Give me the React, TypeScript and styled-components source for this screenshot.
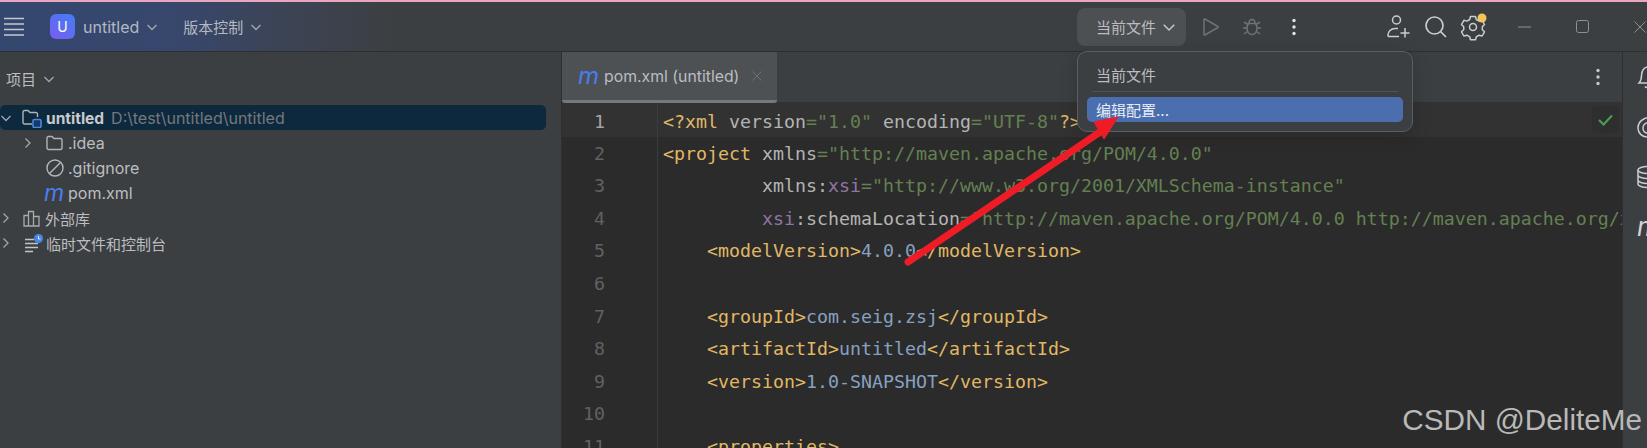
import React from "react";
import styled, { createGlobalStyle } from "styled-components";

const Global = createGlobalStyle`
  html, body { margin: 0; padding: 0; background: #3c3f41; }
  * { box-sizing: border-box; }
  svg { flex: none; }
`;

const UI = `Inter, "Noto Sans CJK SC", sans-serif`;
const MONO = `"DejaVu Sans Mono", "Liberation Mono", monospace`;

const Frame = styled.div`
  position: relative;
  width: 1647px;
  height: 448px;
  overflow: hidden;
  display: flex;
  flex-direction: column;
  background: #3c3f41;
  font-family: ${UI};
  color: #bbbdc0;
  font-size: 15px;
`;
const TopAccent = styled.div`
  height: 2px;
  flex: none;
  background: #e8a6bf;
`;
const TitleBar = styled.header`
  height: 50px;
  flex: none;
  display: flex;
  align-items: center;
  border-bottom: 1px solid #2d2f31;
  background: linear-gradient(90deg, #34476f 0, #37476d 170px, #3c4354 290px, #3c3f41 400px);
`;
const LeftGroup = styled.div`
  width: 1077px;
  flex: none;
  display: flex;
  align-items: center;
  padding-left: 4px;
`;
const ProjectLogo = styled.div`
  width: 25px;
  height: 25px;
  margin-left: 26px;
  border-radius: 6px;
  background: linear-gradient(35deg, #7a5cf0, #3f7ff2);
  color: #fff;
  font-size: 14px;
  display: flex;
  align-items: center;
  justify-content: center;
`;
const TitleMenu = styled.div<{ $ml: number }>`
  display: flex;
  align-items: center;
  gap: 7px;
  margin-left: ${(p) => p.$ml}px;
  white-space: nowrap;
  color: #b4b9c2;
`;
const LatinName = styled.span`
  font-size: 16px;
`;
const RunPill = styled.div`
  width: 109px;
  height: 38px;
  flex: none;
  border-radius: 8px;
  background: #4c5052;
  display: flex;
  align-items: center;
  gap: 6px;
  padding-left: 19px;
  margin-right: 4px;
  white-space: nowrap;
`;
const IconSlot = styled.div<{ $w: number; $ml?: number }>`
  width: ${(p) => p.$w}px;
  margin-left: ${(p) => p.$ml ?? 0}px;
  flex: none;
  display: flex;
  align-items: center;
  justify-content: center;
`;
const Body = styled.main`
  flex: 1;
  min-height: 0;
  display: flex;
`;
const Sidebar = styled.aside`
  width: 562px;
  flex: none;
  border-right: 1px solid #2d2f31;
  padding-right: 15px;
`;
const SidebarHeader = styled.div`
  height: 53px;
  padding: 0 0 0 6px;
  display: flex;
  align-items: center;
  gap: 7px;
`;
const TreeRow = styled.div<{ $selected?: boolean; $indent?: number }>`
  height: 25px;
  display: flex;
  align-items: center;
  padding-top: 1px;
  padding-left: ${(p) => p.$indent ?? 0}px;
  border-radius: 5px;
  background: ${(p) => (p.$selected ? "#0d293e" : "transparent")};
  white-space: nowrap;
`;
const ChevronSlot = styled.div<{ $w: number }>`
  width: ${(p) => p.$w}px;
  flex: none;
  display: flex;
  align-items: center;
`;
const NodeIcon = styled.div<{ $w: number }>`
  width: ${(p) => p.$w}px;
  flex: none;
  display: flex;
  align-items: center;
`;
const RootName = styled.span`
  font-weight: 700;
  font-size: 15.5px;
  color: #c9cacb;
  margin-right: 7px;
`;
const RootPath = styled.span`
  font-size: 16px;
  color: #75787b;
`;
const MavenGlyph = styled.span<{ $size: number; $color: string }>`
  font-family: Inter, sans-serif;
  font-style: italic;
  font-size: ${(p) => p.$size}px;
  line-height: 1;
  color: ${(p) => p.$color};
`;
const EditorPane = styled.section`
  position: relative;
  width: 1060px;
  flex: none;
  display: flex;
  flex-direction: column;
  overflow: hidden;
`;
const TabBar = styled.div`
  height: 50px;
  flex: none;
  display: flex;
  justify-content: space-between;
`;
const Tab = styled.div`
  width: 215px;
  height: 51px;
  position: relative;
  z-index: 1;
  display: flex;
  align-items: center;
  background: #4e5154;
  border-bottom: 3px solid #76787c;
  border-radius: 0 0 3px 3px;
  padding-left: 16px;
  white-space: nowrap;
`;
const TabName = styled.span`
  margin-left: 5px;
  font-size: 15.8px;
`;
const TabClose = styled.div`
  margin-left: 13px;
  display: flex;
`;
const TabActions = styled.div`
  width: 48px;
  display: flex;
  align-items: center;
  justify-content: center;
`;
const Editor = styled.div`
  flex: 1;
  min-height: 0;
  background: #2b2b2b;
  font-family: ${MONO};
  font-size: 18.27px;
`;
const CodeLine = styled.div<{ $current?: boolean }>`
  display: flex;
  height: ${(p) => (p.$current ? "34.7px" : "32.6px")};
  background: ${(p) => (p.$current ? "#323232" : "transparent")};
`;
const LineNumber = styled.div<{ $current?: boolean }>`
  width: 96px;
  flex: none;
  border-right: 1px solid #3a3c3e;
  text-align: right;
  padding-right: 52px;
  line-height: 34px;
  color: ${(p) => (p.$current ? "#a4a3a3" : "#5f6265")};
  padding-top: ${(p) => (p.$current ? "2.7px" : "0")};
`;
const CodeText = styled.div<{ $current?: boolean }>`
  flex: 1;
  padding-left: 5px;
  line-height: 34px;
  white-space: pre;
  overflow: hidden;
  padding-top: ${(p) => (p.$current ? "2.7px" : "0")};
`;
const Tok = styled.span<{ $k: "tag" | "attr" | "str" | "ns" | "txt" }>`
  color: ${(p) =>
    ({ tag: "#e0b865", attr: "#b4b4b4", str: "#648052", ns: "#9274a4", txt: "#86a1c2" })[p.$k]};
`;
const InspectionBadge = styled.div`
  position: absolute;
  top: 54px;
  right: 3px;
  width: 27px;
  height: 27px;
  border-radius: 5px;
  background: #2e2e2e;
  display: flex;
  align-items: center;
  justify-content: center;
`;
const RightStrip = styled.aside`
  flex: 1;
  border-left: 1px solid #2d2f31;
  display: flex;
  flex-direction: column;
  padding: 14px 0 0 14px;
  gap: 28px;
  overflow: hidden;
`;
const StripItem = styled.div`
  width: 30px;
  height: 22px;
  flex: none;
  display: flex;
  align-items: center;
`;
const Popup = styled.div`
  position: absolute;
  left: 1077px;
  top: 51px;
  width: 336px;
  height: 81px;
  z-index: 3;
  border: 1px solid #5b5e61;
  border-radius: 10px;
  background: #3c3f41;
  box-shadow: 0 4px 18px rgba(0, 0, 0, 0.18);
  padding: 0 9px;
  display: flex;
  flex-direction: column;
`;
const PopupLabel = styled.div`
  height: 39px;
  padding: 5px 0 0 9px;
  display: flex;
  align-items: center;
`;
const PopupDivider = styled.div`
  height: 1px;
  margin: 0 5px;
  background: #4f5255;
`;
const PopupItem = styled.div`
  height: 25px;
  margin-top: 5px;
  padding-left: 9px;
  border-radius: 5px;
  background: #4b6eaf;
  color: #e8edf5;
  display: flex;
  align-items: center;
`;
const ArrowLayer = styled.svg`
  position: absolute;
  left: 0;
  top: 0;
  z-index: 4;
  pointer-events: none;
`;
const Watermark = styled.div`
  position: absolute;
  right: 5px;
  bottom: 13px;
  z-index: 5;
  font-family: "Liberation Sans", Arial, sans-serif;
  font-size: 29.7px;
  line-height: 1;
  color: #b9b9b9;
  white-space: nowrap;
`;

type IconProps = { c?: string; w?: number };
const Chevron = ({ dir = "down", c = "#a3a7ad", s = 12 }: { dir?: "down" | "right"; c?: string; s?: number }) => (
  <svg width={s} height={s} viewBox="0 0 12 12" fill="none" stroke={c} strokeWidth="1.3">
    {dir === "down" ? <path d="M1.5 4l4.5 4.5L10.5 4" /> : <path d="M3.5 1.5L8 6l-4.5 4.5" />}
  </svg>
);
const Hamburger = () => (
  <svg width="20" height="19" viewBox="0 0 20 19" fill="none" stroke="#c4c8ce" strokeWidth="1.6">
    <path d="M0 1.5h20M0 7h20M0 12.5h20M0 18h20" />
  </svg>
);
const PlayIcon = () => (
  <svg width="18" height="20" viewBox="0 0 18 20" fill="none" stroke="#6f7274" strokeWidth="1.5" strokeLinejoin="round">
    <path d="M2 2.5v15a.6.6 0 0 0 .9.5l13-7.5a.6.6 0 0 0 0-1L2.9 2a.6.6 0 0 0-.9.5z" />
  </svg>
);
const BugIcon = () => (
  <svg width="20" height="20" viewBox="0 0 20 20" fill="none" stroke="#6f7274" strokeWidth="1.5">
    <path d="M6.5 6.5h7c1 1.500 1.500 3 1.500 5 0 3-2 6-5 6s-5-3-5-6c0-2 .5-3.500 1.500-5z" />
    <path d="M7 6.500C7 4 8 2.500 10 2.500S13 4 13 6.500M1 11h4M15 11h4M2 5l4 2.500M18 5l-4 2.500M2 17l3.500-2.500M18 17l-3.500-2.500" />
  </svg>
);
const Dots = ({ c = "#e1e3e6" }: { c?: string }) => (
  <svg width="4" height="18" viewBox="0 0 4 18" fill={c}>
    <circle cx="2" cy="2.500" r="1.700" />
    <circle cx="2" cy="9" r="1.700" />
    <circle cx="2" cy="15.500" r="1.700" />
  </svg>
);
const UserPlus = () => (
  <svg width="23" height="23" viewBox="0 0 23 23" fill="none" stroke="#c9cdd2" strokeWidth="1.500">
    <circle cx="9.500" cy="5" r="4" />
    <path d="M1 21.500v-1.500c0-3.500 3-6.500 7-6.500h3M1 21.500h11M18 13v9.500M13.500 18h9" />
  </svg>
);
const SearchIcon = () => (
  <svg width="22" height="22" viewBox="0 0 22 22" fill="none" stroke="#c9cdd2" strokeWidth="1.700">
    <circle cx="9.500" cy="9.500" r="8.500" />
    <path d="M15.500 15.500L21 21" />
  </svg>
);
const GearIcon = () => (
  <svg width="24" height="24" viewBox="0 0 24 24" fill="none" stroke="#c9cdd2" strokeWidth="1.500" strokeLinejoin="round" style={{ overflow: "visible" }}>
    <circle cx="12" cy="12" r="3.500" />
    <path d="M9.500 1.500h5l.8 3 2.800 1.600 3-.8 2.400 4.200-2.200 2.200v3l2.200 2.100-2.400 4.200-3-.8-2.800 1.600-.8 3h-5l-.8-3-2.800-1.600-3 .8L.500 16.800l2.200-2.100v-3L.500 9.500l2.400-4.200 3 .8 2.800-1.600z" />
    <circle cx="21" cy="3" r="4.500" fill="#f2c55c" stroke="none" />
  </svg>
);
const MinIcon = () => (
  <svg width="13" height="2" viewBox="0 0 13 2" stroke="#8f9295" strokeWidth="1">
    <path d="M0 1h13" />
  </svg>
);
const MaxIcon = () => (
  <svg width="13" height="13" viewBox="0 0 13 13" fill="none" stroke="#8f9295" strokeWidth="1">
    <rect x=".500" y=".500" width="12" height="12" rx="2" />
  </svg>
);
const CloseIcon = ({ c = "#8f9295", s = 12 }: { c?: string; s?: number }) => (
  <svg width={s} height={s} viewBox="0 0 12 12" stroke={c} strokeWidth="1">
    <path d="M.5.500l11 11M11.500.500l-11 11" />
  </svg>
);
const FolderIcon = ({ w = 17 }: IconProps) => (
  <svg width={w} height="16" viewBox="0 0 17 16" fill="none" stroke="#b0b2b5" strokeWidth="1.400">
    <path d="M1 3a1.500 1.500 0 0 1 1.500-1.500h3.500l2 2h6.500A1.500 1.500 0 0 1 16 5v8a1.500 1.500 0 0 1-1.500 1.500h-12A1.500 1.500 0 0 1 1 13z" />
  </svg>
);
const RootFolderIcon = () => (
  <svg width="20" height="19" viewBox="0 0 20 19" fill="none">
    <path d="M1 3a1.500 1.500 0 0 1 1.500-1.500h3.500l2 2h6a1.500 1.500 0 0 1 1.500 1.500v3M10 15H2.500A1.500 1.500 0 0 1 1 13.500V3" stroke="#b0b2b5" strokeWidth="1.400" />
    <rect x="11" y="10.500" width="8" height="8" rx="1.500" stroke="#4a86e8" strokeWidth="1.600" fill="#1a3a5c" />
  </svg>
);
const IgnoreIcon = () => (
  <svg width="18" height="18" viewBox="0 0 18 18" fill="none" stroke="#b4b6b9" strokeWidth="1.400">
    <circle cx="9" cy="9" r="8" />
    <path d="M3.500 14.500l11-11" />
  </svg>
);
const LibraryIcon = () => (
  <svg width="17" height="17" viewBox="0 0 17 17" fill="none" stroke="#a8abae" strokeWidth="1.300">
    <path d="M1 5.500h4.500V16H1zM5.500 1.500h5V16h-5zM10.500 6.500H16V16h-5.500z" />
  </svg>
);
const ScratchIcon = () => (
  <svg width="19" height="19" viewBox="0 0 19 19" fill="none">
    <path d="M1 5.500h9M1 9.500h13M1 13.500h13M1 17.500h8" stroke="#c3c5c8" strokeWidth="1.400" />
    <circle cx="14.500" cy="4.500" r="4.500" fill="#4a86e8" />
    <path d="M14.500 2v3h2" stroke="#dfe9fb" strokeWidth="1" />
  </svg>
);
const CheckIcon = () => (
  <svg width="15" height="12" viewBox="0 0 15 12" fill="none" stroke="#499c54" strokeWidth="2.200">
    <path d="M1 6l4.500 4.500L14 1.500" />
  </svg>
);
const BellIcon = () => (
  <svg width="22" height="24" viewBox="0 0 22 24" fill="none" stroke="#c9cdd2" strokeWidth="1.500">
    <path d="M2 18c2-2 2.500-4 2.500-7.500C4.500 6 7 2 11 2s6.500 4 6.500 8.500c0 3.500.500 5.500 2.500 7.500zM8 21.500c1 1.500 5 1.500 6 0" />
  </svg>
);
const SpiralIcon = () => (
  <svg width="22" height="22" viewBox="0 0 22 22" fill="none" stroke="#c9cdd2" strokeWidth="1.500">
    <path d="M20 3C10-1 1 4 1 12c0 5 4 9 9 9M20 8C13 4 6 7 6 12c0 3 2 5 5 5M20 12c-3-2-9-2-9 1" />
  </svg>
);
const DbIcon = () => (
  <svg width="22" height="24" viewBox="0 0 22 24" fill="none" stroke="#c9cdd2" strokeWidth="1.500">
    <ellipse cx="11" cy="5" rx="10" ry="3.500" />
    <path d="M1 5v14c0 2 4.500 3.500 10 3.500s10-1.500 10-3.500V5M1 10c0 2 4.500 3.500 10 3.500s10-1.500 10-3.500M1 15c0 2 4.500 3.500 10 3.500s10-1.500 10-3.500" />
  </svg>
);

type T = [("tag" | "attr" | "str" | "ns" | "txt"), string];
const code: T[][] = [
  [["tag", "<?xml "], ["attr", "version"], ["str", '="1.0" '], ["attr", "encoding"], ["str", '="UTF-8"'], ["tag", "?>"]],
  [["tag", "<project "], ["attr", "xmlns"], ["str", '="http://maven.apache.org/POM/4.0.0"']],
  [["attr", "         xmlns:"], ["ns", "xsi"], ["str", '="http://www.w3.org/2001/XMLSchema-instance"']],
  [["ns", "         xsi"], ["attr", ":schemaLocation"], ["str", '="http://maven.apache.org/POM/4.0.0 http://maven.apache.org/x']],
  [["tag", "    <modelVersion>"], ["txt", "4.0.0"], ["tag", "</modelVersion>"]],
  [],
  [["tag", "    <groupId>"], ["txt", "com.seig.zsj"], ["tag", "</groupId>"]],
  [["tag", "    <artifactId>"], ["txt", "untitled"], ["tag", "</artifactId>"]],
  [["tag", "    <version>"], ["txt", "1.0-SNAPSHOT"], ["tag", "</version>"]],
  [],
  [["tag", "    <properties>"]],
];

export default function App() {
  return (
    <Frame>
      <Global />
      <TopAccent />
      <TitleBar>
        <LeftGroup>
          <Hamburger />
          <ProjectLogo>U</ProjectLogo>
          <TitleMenu $ml={8}>
            <LatinName>untitled</LatinName> <Chevron />
          </TitleMenu>
          <TitleMenu $ml={25}>
            版本控制 <Chevron />
          </TitleMenu>
        </LeftGroup>
        <RunPill>
          当前文件 <Chevron c="#c4c7ca" s={14} />
        </RunPill>
        <IconSlot $w={41}><PlayIcon /></IconSlot>
        <IconSlot $w={41}><BugIcon /></IconSlot>
        <IconSlot $w={43}><Dots /></IconSlot>
        <IconSlot $w={37} $ml={65}><UserPlus /></IconSlot>
        <IconSlot $w={37}><SearchIcon /></IconSlot>
        <IconSlot $w={37}><GearIcon /></IconSlot>
        <IconSlot $w={58} $ml={4}><MinIcon /></IconSlot>
        <IconSlot $w={58}><MaxIcon /></IconSlot>
        <IconSlot $w={58}><CloseIcon /></IconSlot>
      </TitleBar>
      <Body>
        <Sidebar>
          <SidebarHeader>
            项目 <Chevron />
          </SidebarHeader>
          <TreeRow $selected>
            <ChevronSlot $w={22}><Chevron /></ChevronSlot>
            <NodeIcon $w={24}><RootFolderIcon /></NodeIcon>
            <RootName>untitled</RootName>
            <RootPath>D:\test\untitled\untitled</RootPath>
          </TreeRow>
          <TreeRow $indent={22}>
            <ChevronSlot $w={24}><Chevron dir="right" /></ChevronSlot>
            <NodeIcon $w={22}><FolderIcon /></NodeIcon>
            <LatinName>.idea</LatinName>
          </TreeRow>
          <TreeRow $indent={46}>
            <NodeIcon $w={22}><IgnoreIcon /></NodeIcon>
            <LatinName>.gitignore</LatinName>
          </TreeRow>
          <TreeRow $indent={44}>
            <NodeIcon $w={24}><MavenGlyph $size={23} $color="#4a7df0">m</MavenGlyph></NodeIcon>
            <LatinName>pom.xml</LatinName>
          </TreeRow>
          <TreeRow>
            <ChevronSlot $w={23}><Chevron dir="right" /></ChevronSlot>
            <NodeIcon $w={22}><LibraryIcon /></NodeIcon>
            外部库
          </TreeRow>
          <TreeRow>
            <ChevronSlot $w={24}><Chevron dir="right" /></ChevronSlot>
            <NodeIcon $w={22}><ScratchIcon /></NodeIcon>
            临时文件和控制台
          </TreeRow>
        </Sidebar>
        <EditorPane>
          <TabBar>
            <Tab>
              <MavenGlyph $size={24} $color="#4a7df0">m</MavenGlyph>
              <TabName>pom.xml (untitled)</TabName>
              <TabClose><CloseIcon c="#72767a" s={10} /></TabClose>
            </Tab>
            <TabActions><Dots c="#c4c7ca" /></TabActions>
          </TabBar>
          <Editor>
            {code.map((line, i) => (
              <CodeLine key={i} $current={i === 0}>
                <LineNumber $current={i === 0}>{i + 1}</LineNumber>
                <CodeText $current={i === 0}>
                  {line.map(([k, s], j) => (
                    <Tok key={j} $k={k}>{s}</Tok>
                  ))}
                </CodeText>
              </CodeLine>
            ))}
          </Editor>
          <InspectionBadge><CheckIcon /></InspectionBadge>
        </EditorPane>
        <RightStrip>
          <StripItem><BellIcon /></StripItem>
          <StripItem><SpiralIcon /></StripItem>
          <StripItem><DbIcon /></StripItem>
          <StripItem><MavenGlyph $size={26} $color="#d0d3d7">m</MavenGlyph></StripItem>
        </RightStrip>
      </Body>
      <Popup>
        <PopupLabel>当前文件</PopupLabel>
        <PopupDivider />
        <PopupItem>编辑配置...</PopupItem>
      </Popup>
      <ArrowLayer width="1647" height="448" viewBox="0 0 1647 448">
        <path d="M908 262L1106 128" stroke="#ef1c27" strokeWidth="7" strokeLinecap="round" />
        <path d="M1118 117L1094 122L1104 139z" fill="#ef1c27" stroke="#ef1c27" strokeWidth="1" />
      </ArrowLayer>
      <Watermark>CSDN @DeliteMe</Watermark>
    </Frame>
  );
}
